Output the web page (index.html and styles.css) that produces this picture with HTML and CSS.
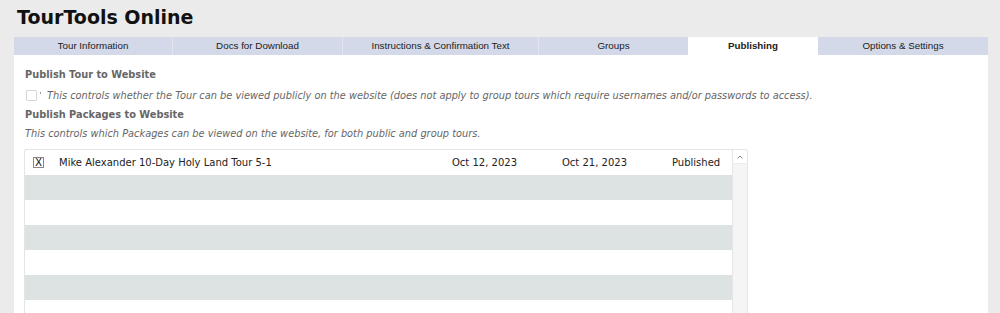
FILE: index.html
```html
<!DOCTYPE html>
<html>
<head>
<meta charset="utf-8">
<link rel="stylesheet" href="styles.css">
</head>
<body>
<header class="top">
  <h1 class="brand">TourTools Online</h1>
</header>
<nav class="tabs">
  <div class="tab">Tour Information</div>
  <div class="tab">Docs for Download</div>
  <div class="tab">Instructions &amp; Confirmation Text</div>
  <div class="tab">Groups</div>
  <div class="tab active">Publishing</div>
  <div class="tab">Options &amp; Settings</div>
</nav>
<main class="panel">
  <h2 class="sec-title">Publish Tour to Website</h2>
  <div class="opt-line">
    <span class="cbox"></span><span class="dot"></span>
    <span class="note">This controls whether the Tour can be viewed publicly on the website (does not apply to group tours which require usernames and/or passwords to access).</span>
  </div>
  <h2 class="sec-title">Publish Packages to Website</h2>
  <p class="note note-line">This controls which Packages can be viewed on the website, for both public and group tours.</p>
  <div class="pkg-box">
    <div class="pkg-rows">
      <div class="row">
        <span class="xbox">X</span>
        <span class="c-name">Mike Alexander 10-Day Holy Land Tour 5-1</span>
        <span class="c-d1">Oct 12, 2023</span>
        <span class="c-d2">Oct 21, 2023</span>
        <span class="c-st">Published</span>
      </div>
      <div class="row alt"></div>
      <div class="row"></div>
      <div class="row alt"></div>
      <div class="row"></div>
      <div class="row alt"></div>
      <div class="row"></div>
    </div>
    <div class="sbar">
      <div class="sbtn"><svg width="8" height="6" viewBox="0 0 8 6"><path d="M1.5 4.5 L4 2 L6.5 4.5" fill="none" stroke="#888" stroke-width="1"/></svg></div>
    </div>
  </div>
</main>
</body>
</html>
```
FILE: styles.css
```css
html, body {
  margin: 0;
  padding: 0;
  background: #ebebeb;
  height: 313px;
  overflow: hidden;
}
body {
  font-family: "DejaVu Sans", Verdana, sans-serif;
}
.top {
  height: 37px;
  padding-left: 17px;
  box-sizing: border-box;
}
.brand {
  margin: 0;
  font-size: 19px;
  line-height: 35px;
  font-weight: bold;
  color: #111;
}
.tabs {
  display: grid;
  grid-template-columns: 158px 170px 196px 150px 130px 1fr;
  margin: 0 12px 0 14px;
  height: 18px;
}
.tab {
  background: #d3d9e8;
  border-left: 1px solid #e2e5ee;
  font-family: "Liberation Sans", Arial, sans-serif;
  font-size: 9.8px;
  line-height: 18px;
  text-align: center;
  color: #222;
}
.tab:first-child { border-left: none; }
.tab.active {
  background: #fff;
  font-weight: bold;
  border-left: none;
}
.tab.active + .tab { border-left: none; }
.panel {
  background: #fff;
  margin: 0 12px 0 14px;
  padding: 10px 11px 0 11px;
  height: 258px;
  box-sizing: border-box;
  overflow: hidden;
}
.sec-title {
  margin: 0;
  font-size: 9.8px;
  line-height: 20px;
  font-weight: bold;
  color: #666;
}
.opt-line {
  display: flex;
  align-items: center;
  height: 20px;
}
.cbox {
  width: 9px;
  height: 9px;
  border: 1px solid #d6d6d6;
  border-radius: 1px;
  margin-left: 1px;
  flex: none;
}
.dot {
  width: 1px;
  height: 2px;
  background: #999;
  margin: 0 6px 0 3px;
  align-self: flex-start;
  margin-top: 7px;
  flex: none;
}
.note {
  font-style: italic;
  font-size: 9.8px;
  color: #666;
  white-space: nowrap;
}
.note-line {
  margin: 0 0 6px 0;
  line-height: 18px;
}
.pkg-box {
  display: flex;
  width: 724px;
  margin-left: -1px;
  border: 1px solid #e4e4e4;
  border-bottom: none;
  border-radius: 3px 3px 0 0;
  overflow: hidden;
  height: 165px;
  box-sizing: border-box;
}
.pkg-rows {
  flex: 1;
}
.row {
  height: 25px;
  display: flex;
  align-items: center;
  font-size: 10px;
  color: #222;
}
.row.alt {
  background: #dde3e3;
}
.xbox {
  width: 9px;
  height: 9px;
  border: 1px solid #888;
  font-family: "Liberation Sans", Arial, sans-serif;
  font-size: 10px;
  line-height: 9px;
  text-align: center;
  color: #000;
  margin-left: 8px;
  flex: none;
}
.c-name { margin-left: 15px; width: 393px; flex: none; }
.c-d1 { width: 110px; flex: none; }
.c-d2 { width: 110px; flex: none; }
.sbar {
  width: 14px;
  flex: none;
  background: #f5f5f5;
  border-left: 1px solid #e6e6e6;
}
.sbtn {
  height: 13px;
  background: #fff;
  border-bottom: 1px solid #ececec;
  display: flex;
  justify-content: center;
  align-items: center;
}
```
